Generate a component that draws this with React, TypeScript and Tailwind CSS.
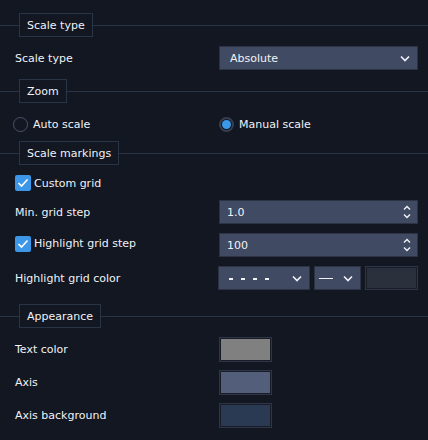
import React from 'react';

const font = { fontFamily: '"DejaVu Sans", Verdana, sans-serif' };

const Chevron: React.FC = () => (
  <svg width="10" height="7" viewBox="0 0 10 7" className="shrink-0">
    <path d="M1 1.5 L5 5.5 L9 1.5" fill="none" stroke="#f1f3f7" strokeWidth="1.6" />
  </svg>
);

const Spinner: React.FC = () => (
  <div className="flex flex-col items-center gap-[4px]">
    <svg width="8" height="5" viewBox="0 0 8 5">
      <path d="M1 4.5 L4 1.5 L7 4.5" fill="none" stroke="#f1f3f7" strokeWidth="1.4" />
    </svg>
    <svg width="8" height="5" viewBox="0 0 8 5">
      <path d="M1 0.5 L4 3.5 L7 0.5" fill="none" stroke="#f1f3f7" strokeWidth="1.4" />
    </svg>
  </div>
);

const Check: React.FC = () => (
  <div className="w-4 h-4 rounded-[2px] bg-[#3d97e8] flex items-center justify-center shrink-0">
    <svg width="12" height="10" viewBox="0 0 12 10">
      <path d="M1.5 5 L4.5 8 L10.5 1.5" fill="none" stroke="#ffffff" strokeWidth="1.6" />
    </svg>
  </div>
);

const Section: React.FC<{ title: string; className?: string }> = ({ title, className }) => (
  <div className={`flex items-center h-6 ${className ?? ''}`}>
    <div className="w-[19px] h-px bg-[#2a3447]" />
    <div className="h-6 border border-[#2a3447] px-[7px] pt-[2px] flex items-center text-[#f0f2f6]">{title}</div>
    <div className="flex-1 h-px bg-[#2a3447]" />
  </div>
);

const Row: React.FC<{ label: React.ReactNode; className?: string; children?: React.ReactNode }> = ({
  label,
  className,
  children,
}) => (
  <div className={`flex items-center pl-[15px] pr-[10px] ${className ?? ''}`}>
    <div className="w-[204px] pt-[2px] flex items-center text-[#f0f2f6]">{label}</div>
    <div className="flex-1 flex items-center gap-1">{children}</div>
  </div>
);

const Swatch: React.FC<{ color: string }> = ({ color }) => (
  <div className="w-[53px] h-[25px] border border-[#2f3548] p-px bg-[#181c27]">
    <div className="w-full h-full" style={{ backgroundColor: color }} />
  </div>
);

const App: React.FC = () => {
  return (
    <div className="w-[428px] h-[440px] bg-[#121722] text-[11px] pt-[13px] flex flex-col" style={font}>
      <Section title="Scale type" />
      <Row label="Scale type" className="mt-[9px] h-6">
        <div className="w-[199px] h-6 bg-[#404a63] border border-[#2c3345] pl-[10px] pr-[7px] flex items-center justify-between text-[#f0f2f6]">
          <span className="pt-[2px]">Absolute</span>
          <Chevron />
        </div>
      </Row>

      <Section title="Zoom" className="mt-[9px]" />
      <div className="mt-[14px] h-[14px] flex items-center text-[#f0f2f6]">
        <div className="w-[219px] pl-[13px] flex items-center gap-[5px]">
          <div className="w-[15px] h-[15px] rounded-full border border-[#4a536a]" />
          <span className="pt-[2px]">Auto scale</span>
        </div>
        <div className="flex items-center gap-[5px]">
          <div className="w-[15px] h-[15px] rounded-full border-2 border-[#363e53] flex items-center justify-center">
            <div className="w-[9px] h-[9px] rounded-full bg-[#3b9ae8]" />
          </div>
          <span className="pt-[2px]">Manual scale</span>
        </div>
      </div>

      <Section title="Scale markings" className="mt-[10px]" />
      <div className="mt-[10px] h-4 pl-[15px] flex items-center gap-[3px] text-[#f0f2f6]">
        <Check />
        <span className="pt-[2px]">Custom grid</span>
      </div>
      <Row label="Min. grid step" className="mt-[9px] h-6">
        <div className="w-[199px] h-6 bg-[#404a63] border border-[#2c3345] pl-[7px] pr-[6px] flex items-center justify-between text-[#f0f2f6]">
          <span className="pt-[2px]">1.0</span>
          <Spinner />
        </div>
      </Row>
      <Row
        label={
          <span className="flex items-center gap-[3px] -mt-[5px]">
            <Check />
            <span className="pt-[2px]">Highlight grid step</span>
          </span>
        }
        className="mt-[9px] h-6"
      >
        <div className="ml-px w-[199px] h-6 bg-[#404a63] border border-[#2c3345] pl-[7px] pr-[6px] flex items-center justify-between text-[#f0f2f6]">
          <span className="pt-[2px]">100</span>
          <Spinner />
        </div>
      </Row>
      <Row label="Highlight grid color" className="mt-[9px] h-6">
        <div className="w-[92px] h-6 bg-[#404a63] border border-[#2c3345] pl-[10px] pr-[7px] flex items-center justify-between">
          <div className="flex items-center gap-[8px] pt-[1px]">
            <div className="w-[4px] h-[2px] bg-[#f0f2f6]" />
            <div className="w-[4px] h-[2px] bg-[#f0f2f6]" />
            <div className="w-[4px] h-[2px] bg-[#f0f2f6]" />
            <div className="w-[4px] h-[2px] bg-[#f0f2f6]" />
          </div>
          <Chevron />
        </div>
        <div className="w-[47px] h-6 bg-[#404a63] border border-[#2c3345] pl-[4px] pr-[7px] flex items-center justify-between">
          <div className="w-[14px] h-px bg-[#f0f2f6] mt-[1px]" />
          <Chevron />
        </div>
        <div className="w-[53px] h-6 border border-[#2f3548] p-px bg-[#181c27]">
          <div className="w-full h-full bg-[#2a313c]" />
        </div>
      </Row>

      <Section title="Appearance" className="mt-[14px]" />
      <Row label="Text color" className="mt-[9px] h-[25px]">
        <Swatch color="#808080" />
      </Row>
      <Row label="Axis" className="mt-[8px] h-[25px]">
        <Swatch color="#535f7a" />
      </Row>
      <Row label="Axis background" className="mt-[8px] h-[25px]">
        <Swatch color="#2a3a52" />
      </Row>
    </div>
  );
};

export default App;
